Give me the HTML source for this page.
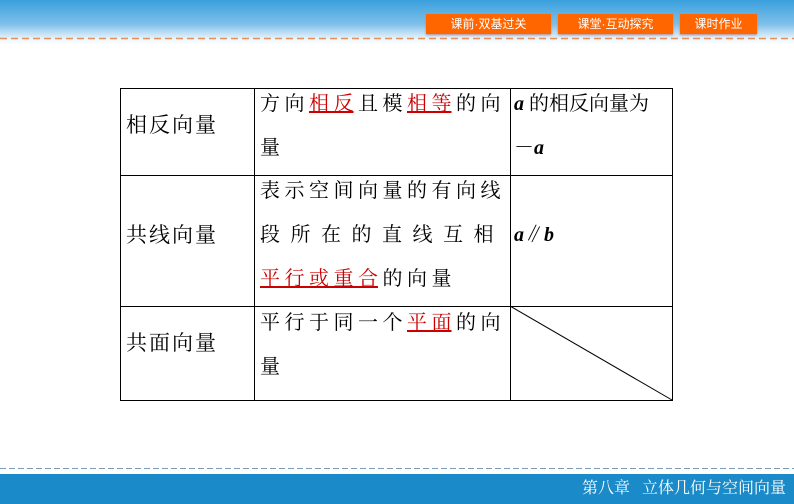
<!DOCTYPE html>
<html><head><meta charset="utf-8"><style>
body{margin:0;width:794px;height:504px;position:relative;overflow:hidden;background:#fff;font-family:"Liberation Serif","Noto Serif CJK SC",serif;}
.top{position:absolute;left:0;top:0;width:794px;height:44px;background:linear-gradient(#3aa0dc 0%,#7fc0ea 55%,#eef7fd 90%,#fff 100%);}
.btn{position:absolute;top:14px;height:20px;background:#ff6600;color:#fff;font:12px "Liberation Sans","Noto Sans CJK SC",sans-serif;line-height:20px;text-align:center;box-shadow:0 1px 2px #b88;}
.bot{position:absolute;left:0;top:474px;width:794px;height:30px;background:#1a8ac8;color:#fff;font-size:16px;line-height:30px;text-align:right;}
.t{position:absolute;font-size:20px;line-height:44px;white-space:nowrap;color:#000;}
.w{letter-spacing:4.5px}
.r{color:#c00;text-decoration:underline;text-decoration-color:#c00;}
.e{letter-spacing:0;margin-right:4.5px}
.l{position:absolute;background:#000;}
</style></head><body>
<div class="top"></div>
<svg style="position:absolute;left:0;top:37px" width="794" height="3"><line x1="0" y1="1.5" x2="794" y2="1.5" stroke="#e8905a" stroke-width="1.5" stroke-dasharray="7,4"/></svg>
<div class="btn" style="left:426px;width:125px">课前·双基过关</div>
<div class="btn" style="left:558px;width:115px">课堂·互动探究</div>
<div class="btn" style="left:680px;width:77px">课时作业</div>
<svg style="position:absolute;left:0;top:467px" width="794" height="3"><line x1="0" y1="1.5" x2="794" y2="1.5" stroke="#7a9cb0" stroke-width="1" stroke-dasharray="6,3"/></svg>
<div class="bot"><span style="margin-right:8px">第八章&nbsp;&nbsp;&nbsp;立体几何与空间向量</span></div>

<div class="l" style="left:120px;top:88px;width:553px;height:1px"></div>
<div class="l" style="left:120px;top:175px;width:553px;height:1px"></div>
<div class="l" style="left:120px;top:306px;width:553px;height:1px"></div>
<div class="l" style="left:120px;top:400px;width:553px;height:1px"></div>
<div class="l" style="left:120px;top:88px;width:1px;height:313px"></div>
<div class="l" style="left:254px;top:88px;width:1px;height:313px"></div>
<div class="l" style="left:510px;top:88px;width:1px;height:313px"></div>
<div class="l" style="left:672px;top:88px;width:1px;height:313px"></div>
<svg style="position:absolute;left:510px;top:306px" width="163" height="95"><line x1="0" y1="0" x2="162" y2="94" stroke="#000" stroke-width="1"/></svg>

<div class="t" style="left:126px;top:103px;letter-spacing:2px;font-size:21px">相反向量</div>
<div class="t w" style="left:260px;top:82px">方向<span class="r">相<span class="e">反</span></span>且模<span class="r">相<span class="e">等</span></span>的向</div>
<div class="t" style="left:260px;top:126px">量</div>
<div class="t" style="left:514px;top:82px"><b><i>a</i></b> 的相反向量为</div>
<div class="t" style="left:514px;top:126px">－<b><i>a</i></b></div>

<div class="t" style="left:126px;top:213px;letter-spacing:2px;font-size:21px">共线向量</div>
<div class="t w" style="left:260px;top:169px">表示空间向量的有向线</div>
<div class="t" style="left:260px;top:213px;letter-spacing:10.5px">段所在的直线互相</div>
<div class="t w" style="left:260px;top:257px"><span class="r">平行或重<span class="e">合</span></span>的向量</div>
<div class="t" style="left:514px;top:213px"><b><i>a</i></b>∥<b><i>b</i></b></div>

<div class="t" style="left:126px;top:321px;letter-spacing:2px;font-size:21px">共面向量</div>
<div class="t w" style="left:260px;top:301px">平行于同一个<span class="r">平<span class="e">面</span></span>的向</div>
<div class="t" style="left:260px;top:345px">量</div>
</body></html>
